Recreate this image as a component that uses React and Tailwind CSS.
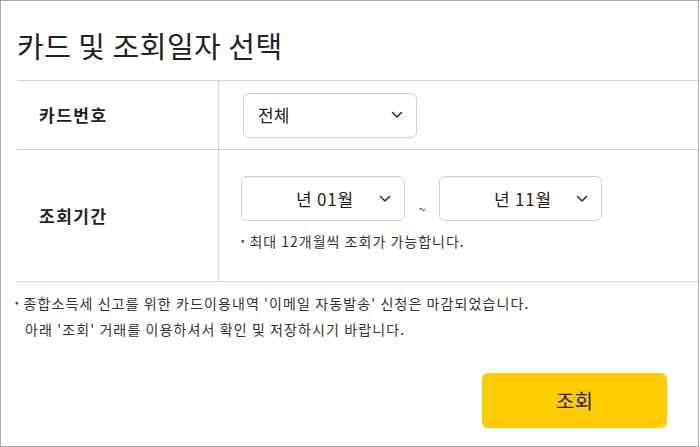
import React from 'react';

const Chevron = () => (
  <svg width="12" height="8" viewBox="0 0 12 8" fill="none" className="shrink-0">
    <path d="M1.5 1.5 L6 6 L10.5 1.5" stroke="#333" strokeWidth="1.6" strokeLinecap="round" strokeLinejoin="round" />
  </svg>
);

const Select = ({ children, className }) => (
  <div
    className={`flex items-center justify-between border border-[#cfcfcf] rounded-md bg-white h-[45px] pr-[13px] ${className}`}
  >
    {children}
    <Chevron />
  </div>
);

const Bullet = () => <span className="relative -top-[3px] mr-[4px] text-[10px] leading-none">•</span>;

const App = () => {
  return (
    <div
      className="w-[699px] h-[447px] border border-[#aaaaaa] bg-white text-[#222] overflow-hidden"
      style={{ fontFamily: '"Noto Sans CJK KR", "Noto Sans", sans-serif' }}
    >
      {/* Title */}
      <h1 className="pl-4 h-[79px] flex items-center text-[29px] font-normal tracking-[0.5px] leading-none pt-[10px]">
        카드 및 조회일자 선택
      </h1>

      {/* Table */}
      <div className="ml-4 border-t border-b border-[#d4d4d4]">
        <div className="flex h-[69px] border-b border-[#d4d4d4]">
          <div className="w-[202px] border-r border-[#d4d4d4] flex items-center pl-[22px] text-[17px] font-bold tracking-[1.5px]">
            카드번호
          </div>
          <div className="flex items-center pl-[24px]">
            <Select className="w-[174px] pl-[14px] text-[17px]">
              <span>전체</span>
            </Select>
          </div>
        </div>

        <div className="flex h-[131px]">
          <div className="w-[202px] border-r border-[#d4d4d4] flex items-center pl-[22px] text-[17px] font-bold tracking-[1.5px]">
            조회기간
          </div>
          <div className="flex flex-col pl-[22px] pt-[26px]">
            <div className="flex items-center">
              <Select className="w-[164px] pl-[54px] text-[17px] tracking-[0.8px]">
                <span>년 01월</span>
              </Select>
              <span className="w-[34px] text-center text-[13px] text-[#555] mt-[20px]">~</span>
              <Select className="w-[163px] pl-[54px] text-[17px] tracking-[0.8px]">
                <span>년 11월</span>
              </Select>
            </div>
            <p className="mt-[10px] text-[14px] text-[#333] tracking-[1px]">
              <Bullet />최대 12개월씩 조회가 가능합니다.
            </p>
          </div>
        </div>
      </div>

      {/* Notice */}
      <div className="pl-[14px] pt-[8px] text-[14px] text-[#333] leading-[26px] tracking-[1.1px]">
        <p>
          <Bullet />종합소득세 신고를 위한 카드이용내역 '이메일 자동발송' 신청은 마감되었습니다.
        </p>
        <p className="pl-[10px]">아래 '조회' 거래를 이용하셔서 확인 및 저장하시기 바랍니다.</p>
      </div>

      {/* Button */}
      <div className="flex justify-end pr-[31px] pt-[31px]">
        <button className="w-[185px] h-[55px] rounded-md bg-[#ffcc00] text-[20px] text-[#222]">
          조회
        </button>
      </div>
    </div>
  );
};

export default App;
